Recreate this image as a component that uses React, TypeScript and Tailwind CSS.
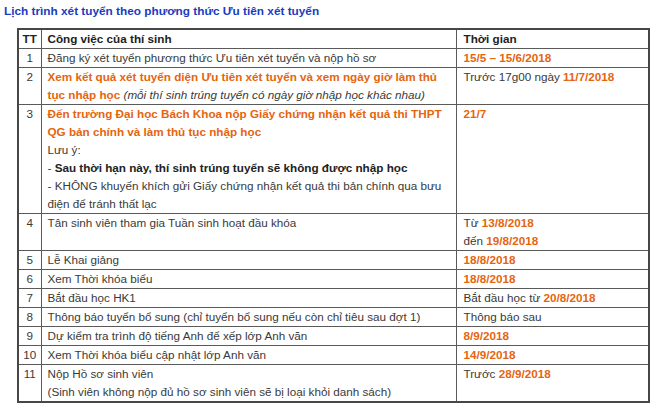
import React from "react";

const O = ({ children }: { children: React.ReactNode }) => (
  <span className="font-bold text-[#e5650f]">{children}</span>
);

const td = "border border-[#5a5a5a] align-top px-0 py-0";

export default function App() {
  const rows: [string, React.ReactNode, React.ReactNode][] = [
    ["1", "Đăng ký xét tuyển phương thức Ưu tiên xét tuyển và nộp hồ sơ", <O>15/5 – 15/6/2018</O>],
    [
      "2",
      <>
        <O>Xem kết quả xét tuyển diện Ưu tiên xét tuyển và xem ngày giờ làm thủ tục nhập học</O>{" "}
        <i>(mỗi thí sinh trúng tuyển có ngày giờ nhập học khác nhau)</i>
      </>,
      <>
        Trước 17g00 ngày <O>11/7/2018</O>
      </>,
    ],
    [
      "3",
      <>
        <O>Đến trường Đại học Bách Khoa nộp Giấy chứng nhận kết quả thi THPT QG bản chính và làm thủ tục nhập học</O>
        <div>Lưu ý:</div>
        <div>
          - <b className="text-[#222]">Sau thời hạn này, thí sinh trúng tuyển sẽ không được nhập học</b>
        </div>
        <div>- KHÔNG khuyến khích gửi Giấy chứng nhận kết quả thi bản chính qua bưu điện để tránh thất lạc</div>
      </>,
      <O>21/7</O>,
    ],
    [
      "4",
      "Tân sinh viên tham gia Tuần sinh hoạt đầu khóa",
      <>
        <div>
          Từ <O>13/8/2018</O>
        </div>
        <div>
          đến <O>19/8/2018</O>
        </div>
      </>,
    ],
    ["5", "Lễ Khai giảng", <O>18/8/2018</O>],
    ["6", "Xem Thời khóa biểu", <O>18/8/2018</O>],
    [
      "7",
      "Bắt đầu học HK1",
      <>
        Bắt đầu học từ <O>20/8/2018</O>
      </>,
    ],
    ["8", "Thông báo tuyển bổ sung (chỉ tuyển bổ sung nếu còn chỉ tiêu sau đợt 1)", "Thông báo sau"],
    ["9", "Dự kiểm tra trình độ tiếng Anh để xếp lớp Anh văn", <O>8/9/2018</O>],
    ["10", "Xem Thời khóa biểu cập nhật lớp Anh văn", <O>14/9/2018</O>],
    [
      "11",
      <>
        <div>Nộp Hồ sơ sinh viên</div>
        <div>(Sinh viên không nộp đủ hồ sơ sinh viên sẽ bị loại khỏi danh sách)</div>
      </>,
      <>
        Trước <O>28/9/2018</O>
      </>,
    ],
  ];

  return (
    <div
      className="w-[660px] h-[409px] bg-white overflow-hidden text-[11.7px] leading-[18px] text-[#3a3a3a]"
      style={{ fontFamily: '"Liberation Sans", Arial, sans-serif' }}
    >
      <div className="pl-[4px] pt-[2px] h-[28px] font-bold text-[#1a3cc0] text-[11.8px] leading-[18px]">
        Lịch trình xét tuyển theo phương thức Ưu tiên xét tuyển
      </div>
      <table className="ml-[17px] w-[631px] border-collapse border-2 border-[#474747] table-fixed">
        <colgroup>
          <col className="w-[23px]" />
          <col className="w-[415px]" />
          <col className="w-[193px]" />
        </colgroup>
        <thead>
          <tr className="font-bold text-[#222]">
            <td className={`${td} text-center`}>TT</td>
            <td className={`${td} pl-[6px]`}>Công việc của thí sinh</td>
            <td className={`${td} pl-[7px]`}>Thời gian</td>
          </tr>
        </thead>
        <tbody>
          {rows.map(([n, a, b]) => (
            <tr key={n}>
              <td className={`${td} text-center`}>{n}</td>
              <td className={`${td} pl-[6px] pr-[8px]`}>{a}</td>
              <td className={`${td} pl-[7px]`}>{b}</td>
            </tr>
          ))}
        </tbody>
      </table>
    </div>
  );
}
